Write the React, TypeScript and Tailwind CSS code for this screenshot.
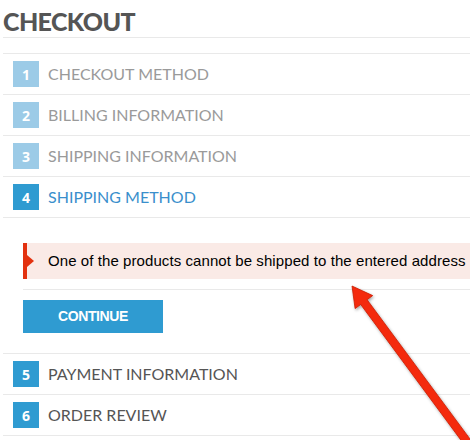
import React from "react";

const steps1 = [
  { n: 1, label: "CHECKOUT METHOD" },
  { n: 2, label: "BILLING INFORMATION" },
  { n: 3, label: "SHIPPING INFORMATION" },
];
const steps2 = [
  { n: 5, label: "PAYMENT INFORMATION" },
  { n: 6, label: "ORDER REVIEW" },
];

function Row({ n, label, variant }: { n: number; label: string; variant: "done" | "active" | "todo" }) {
  const box = variant === "done" ? "bg-[#9ccbe7]" : "bg-[#2f9bd1]";
  const txt = variant === "done" ? "text-[#9a9a9a]" : variant === "active" ? "text-[#3a8fcc]" : "text-[#555555]";
  return (
    <div className="flex h-[41px] items-center border-b border-[#e9e9e9] pl-[10px]">
      <div className={`flex h-[26px] w-[26px] items-center justify-center ${box} text-[14px] font-bold text-white`} style={{ fontFamily: "'Open Sans', sans-serif" }}>
        {n}
      </div>
      <div className={`ml-[9px] text-[16px] ${txt} tracking-[0px]`} style={{ fontFamily: "Lato, sans-serif" }}>
        {label}
      </div>
    </div>
  );
}

export default function App() {
  return (
    <div className="relative h-[440px] w-[470px] overflow-hidden bg-white">
      <div className="pl-[3px] pt-[6px]">
        <h1 className="h-[31px] text-[25px] font-black leading-[30px] text-[#555555] tracking-[-0.6px]" style={{ fontFamily: "Lato, sans-serif" }}>
          CHECKOUT
        </h1>
        <div className="h-[16px] border-t border-[#e9e9e9]" />
        <div className="border-t border-[#e9e9e9]">
          {steps1.map((s) => (
            <Row key={s.n} n={s.n} label={s.label} variant="done" />
          ))}
          <Row n={4} label="SHIPPING METHOD" variant="active" />
          <div className="border-b border-[#e9e9e9] pl-[20px] pt-[25px] pb-[20px]">
            <div className="relative flex h-[36px] items-center bg-[#faeae6] pl-[25px] text-[15px] text-black whitespace-nowrap tracking-[0.08px]" style={{ fontFamily: "'Liberation Sans', Arial, sans-serif" }}>
              <div className="absolute left-0 top-0 h-full w-[4px] bg-[#e3310f]" />
              <div className="absolute left-[4px] top-[12px] h-0 w-0 border-y-[6px] border-l-[7px] border-y-transparent border-l-[#e3310f]" />
              One of the products cannot be shipped to the entered address
            </div>
            <div className="mt-[10px] border-t border-[#e9e9e9] pt-[10px]">
              <button className="flex h-[33px] w-[140px] items-center justify-center bg-[#2f9bd1] text-[14px] font-bold text-white tracking-[-0.4px]" style={{ fontFamily: "'Liberation Sans', Arial, sans-serif" }}>
                CONTINUE
              </button>
            </div>
          </div>
          {steps2.map((s) => (
            <Row key={s.n} n={s.n} label={s.label} variant="todo" />
          ))}
        </div>
      </div>
      <svg className="pointer-events-none absolute left-0 top-0" width="470" height="440" viewBox="0 0 470 440">
        <defs>
          <filter id="sh" x="-20%" y="-20%" width="140%" height="140%">
            <feDropShadow dx="1" dy="1.5" stdDeviation="1.5" floodColor="#000" floodOpacity="0.35" />
          </filter>
        </defs>
        <polygon
          points="352,286 372.7,295.6 367.1,299.7 474,444.4 467.6,449.2 360.7,304.5 355.1,308.6"
          fill="#f4290b"
          stroke="#c81e05"
          strokeWidth="0.8"
          strokeLinejoin="round"
          filter="url(#sh)"
        />
      </svg>
    </div>
  );
}
